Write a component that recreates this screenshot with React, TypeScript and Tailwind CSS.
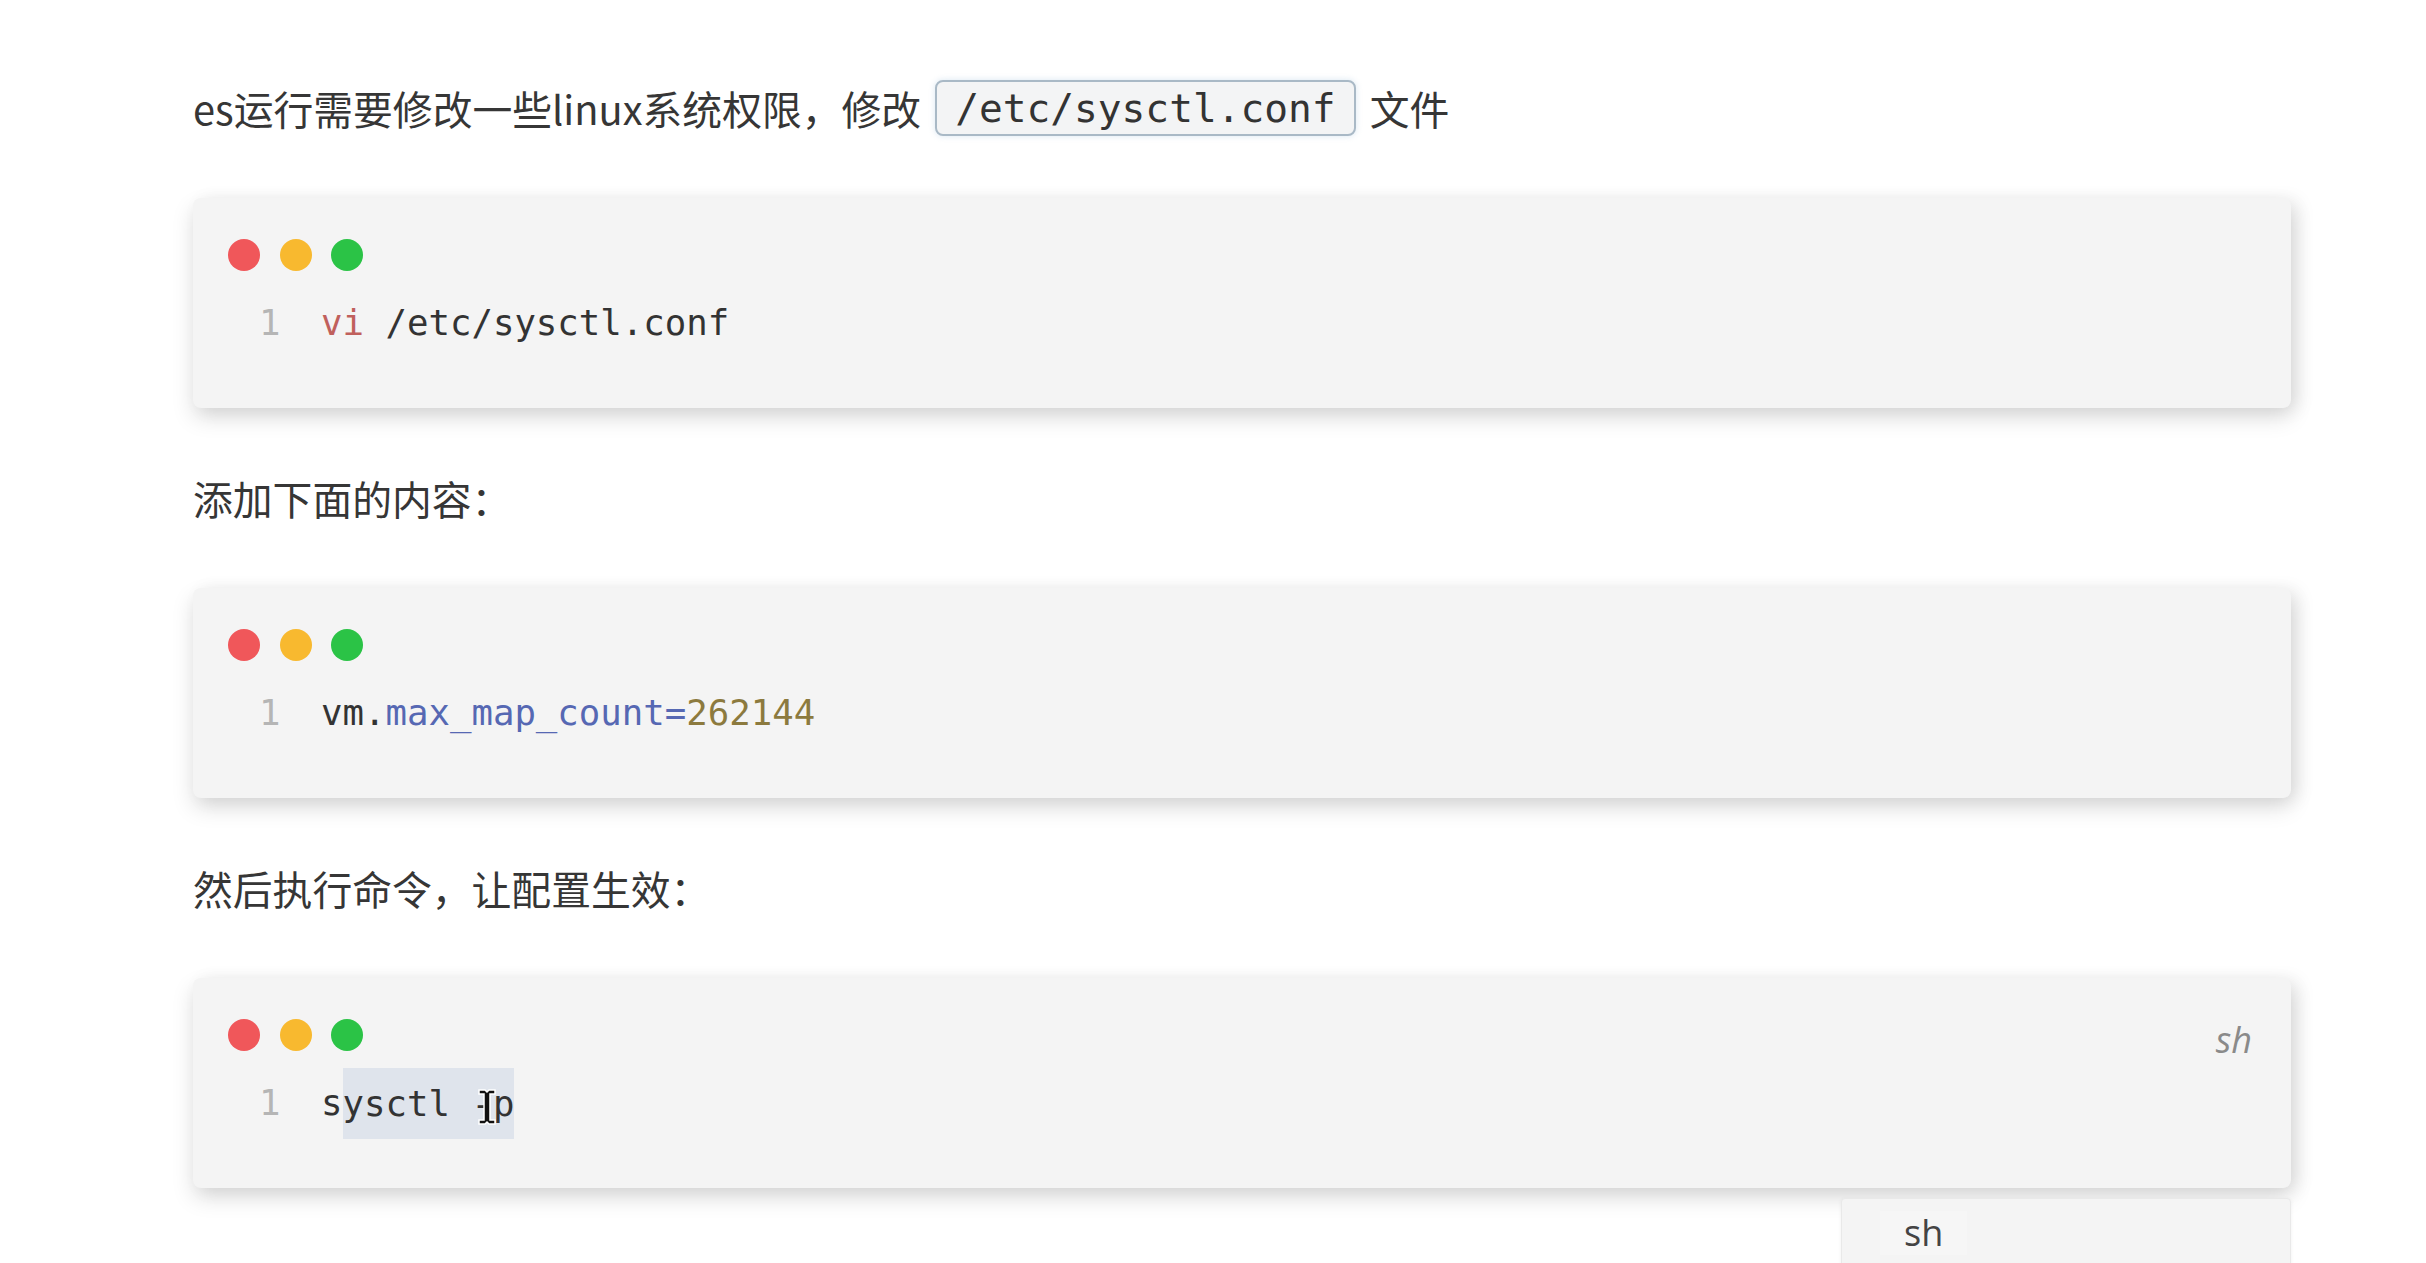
import React from 'react';

const mono = "font-['DejaVu_Sans_Mono','Liberation_Mono',monospace]";
const cjk = "font-['Noto_Sans_CJK_SC','Noto_Sans',sans-serif]";

const Dots: React.FC = () => (
  <div className="flex gap-[19.5px]">
    <div className="w-[32px] h-[32px] rounded-full bg-[#f0575a]" />
    <div className="w-[32px] h-[32px] rounded-full bg-[#f8b92f]" />
    <div className="w-[32px] h-[32px] rounded-full bg-[#2bc346]" />
  </div>
);

const CodeBlock: React.FC<{ children: React.ReactNode; extra?: React.ReactNode }> = ({ children, extra }) => (
  <div className="relative w-[2098px] h-[210px] bg-[#f4f4f4] rounded-[8px] pt-[41px] pl-[35px] shadow-[0_10px_22px_rgba(0,0,0,0.13),8px_2px_18px_rgba(0,0,0,0.08)]">
    <Dots />
    <div className={`mt-[25px] h-[54px] flex items-center text-[35.7px] text-[#333] ${mono}`}>
      <span className="ml-[31px] w-[22px] text-[#b5b5b5] leading-[54px]">1</span>
      <div className="ml-[40px] flex items-center">{children}</div>
    </div>
    {extra}
  </div>
);

const App: React.FC = () => {
  return (
    <div className="w-full h-[1263px] overflow-hidden bg-white pt-[78px] pl-[193px]">
      <div className={`w-[2098px] ${cjk} text-[#363636]`}>
        {/* intro line */}
        <p className="h-[60px] flex items-center text-[39.8px] leading-[60px] whitespace-pre">
          <span>es运行需要修改一些linux系统权限，修改</span>
          <code className={`mx-[14px] h-[56px] px-[18px] flex items-center rounded-[8px] border-2 border-[#a9b9c6] bg-[#f3f4f5] text-[39.5px] text-[#333] shadow-[0_0_6px_rgba(170,200,225,0.45)] ${mono}`}>
            /etc/sysctl.conf
          </code>
          <span>文件</span>
        </p>

        <div className="mt-[60px]">
          <CodeBlock>
            <span className="leading-[54px] text-[#c0605c]">vi</span>
            <span className="leading-[54px] whitespace-pre"> /etc/sysctl.conf</span>
          </CodeBlock>
        </div>

        <p className="mt-[60px] h-[60px] text-[39.8px] leading-[60px]">添加下面的内容：</p>

        <div className="mt-[60px]">
          <CodeBlock>
            <span className="leading-[54px] text-[#333]">vm.</span>
            <span className="leading-[54px] text-[#5668b3]">max_map_count=</span>
            <span className="leading-[54px] text-[#8c7a3e]">262144</span>
          </CodeBlock>
        </div>

        <p className="mt-[60px] h-[60px] text-[39.8px] leading-[60px]">然后执行命令，让配置生效：</p>

        <div className="mt-[60px]">
          <CodeBlock
            extra={
              <>
                <span className="absolute right-[39px] top-[40px] leading-[44px] text-[36px] italic text-[#8a8a8a] font-['Open_Sans',sans-serif]">
                  sh
                </span>
                {/* mouse text cursor */}
                <svg className="absolute left-[283px] top-[110px]" width="22" height="38" viewBox="0 0 22 38">
                  <path
                    d="M3 2h6l2 2 2-2h6v4h-5v26h5v4h-6l-2-2-2 2H3v-4h5V6H3z"
                    fill="#111"
                    stroke="#fff"
                    strokeWidth="1.5"
                  />
                </svg>
                {/* language dropdown */}
                <div className="absolute right-0 top-[220px] w-[450px] h-[80px] bg-[#f4f4f4] border border-[#e9e9e9] rounded-[4px] shadow-[0_1px_4px_rgba(0,0,0,0.06)] pt-[12px] pl-[38px]">
                  <span className="inline-block px-[24px] h-[44px] leading-[44px] bg-[#f6f6f6] text-[36px] text-[#444] font-['Open_Sans',sans-serif]">
                    sh
                  </span>
                </div>
              </>
            }
          >
            <span className="leading-[54px]">s</span>
            <span className="h-[71px] leading-[71px] bg-[#dfe4ec] whitespace-pre">ysctl -p</span>
          </CodeBlock>
        </div>
      </div>
    </div>
  );
};

export default App;
